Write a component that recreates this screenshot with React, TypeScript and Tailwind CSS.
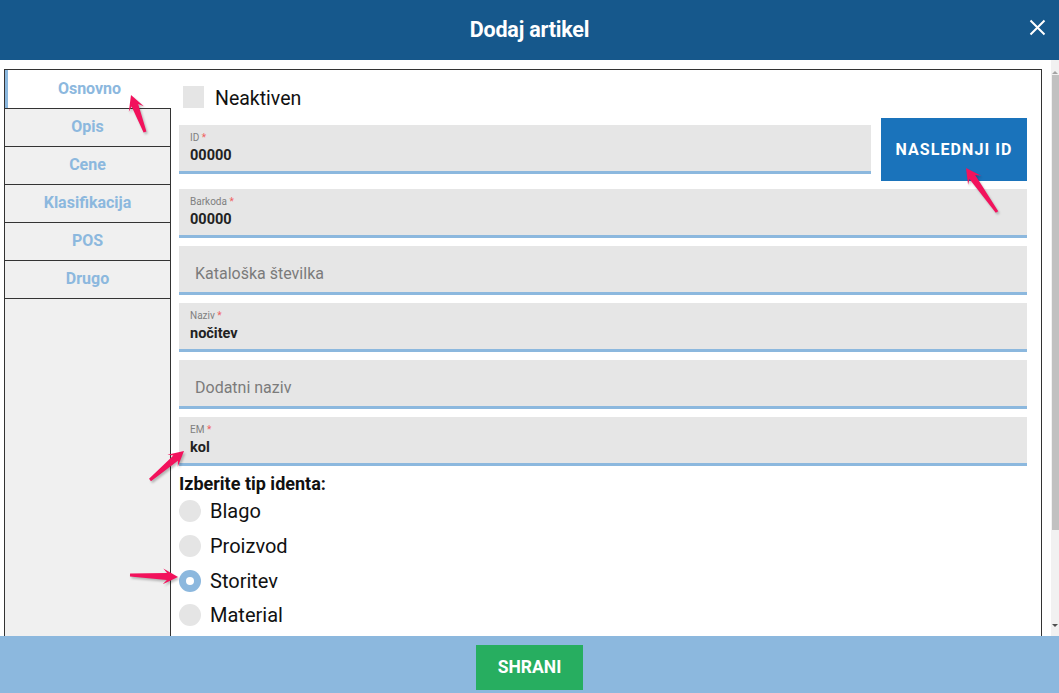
import React from "react";

const F = { fontFamily: "Roboto, 'Liberation Sans', sans-serif" };

function Arrow({ tip, tail }: { tip: [number, number]; tail: [number, number] }) {
  const [tx, ty] = tip;
  const [bx, by] = tail;
  const dx = tx - bx;
  const dy = ty - by;
  const len = Math.hypot(dx, dy);
  const ux = dx / len;
  const uy = dy / len;
  const px = -uy;
  const py = ux;
  const headLen = 15;
  const headW = 8;
  const neckW = 3.5;
  const tailW = 1.5;
  const hx = tx - ux * headLen;
  const hy = ty - uy * headLen;
  const nx = tx - ux * (headLen - 4);
  const ny = ty - uy * (headLen - 4);
  const pts = [
    [tx, ty],
    [hx + px * headW, hy + py * headW],
    [nx + px * neckW, ny + py * neckW],
    [bx + px * tailW, by + py * tailW],
    [bx - px * tailW, by - py * tailW],
    [nx - px * neckW, ny - py * neckW],
    [hx - px * headW, hy - py * headW],
  ]
    .map((p) => p.join(","))
    .join(" ");
  return (
    <g>
      <polygon points={pts} fill="rgba(0,0,0,0.25)" transform="translate(1.5,2)" filter="url(#blur)" />
      <polygon points={pts} fill="#f2125c" />
    </g>
  );
}

function Field({ label, value, placeholder }: { label?: string; value?: string; placeholder?: string }) {
  return (
    <div className="h-[49px] w-full bg-[#e6e6e6] border-b-[3px] border-[#8cb8de] pl-[11px] flex flex-col justify-center">
      {placeholder ? (
        <div className="text-[16px] text-[#7b7b7b] pl-[5px] pt-[10px]">{placeholder}</div>
      ) : (
        <>
          <div className="text-[10px] leading-[12px] text-[#808080]">
            {label} <span className="text-[#f06060]">*</span>
          </div>
          <div className="text-[14.5px] leading-[18px] font-bold text-[#222] mt-[3px]">{value}</div>
        </>
      )}
    </div>
  );
}

function Radio({ label, checked }: { label: string; checked?: boolean }) {
  return (
    <div className="h-[34.7px] flex items-center gap-[9px]">
      <div
        className={
          "w-[22px] h-[22px] rounded-full flex items-center justify-center " +
          (checked ? "bg-[#8cb8de]" : "bg-[#e5e5e5]")
        }
      >
        {checked && <div className="w-[8px] h-[8px] rounded-full bg-white" />}
      </div>
      <span className="text-[20px] leading-[24px] text-[#111]">{label}</span>
    </div>
  );
}

export default function App() {
  const tabs = ["Opis", "Cene", "Klasifikacija", "POS", "Drugo"];
  return (
    <div className="relative w-[1059px] h-[693px] overflow-hidden bg-white flex flex-col" style={F}>
      <div className="h-[60px] bg-[#16588c] flex items-center justify-center relative shrink-0">
        <span className="text-white text-[21.5px] font-bold tracking-[-0.2px]">Dodaj artikel</span>
        <svg className="absolute left-[1029px] top-[19px]" width="17" height="17" viewBox="0 0 17 17">
          <path d="M1.5 1.5 L15.5 15.5 M15.5 1.5 L1.5 15.5" stroke="white" strokeWidth="2" />
        </svg>
      </div>

      <div className="flex-1 flex overflow-hidden">
        <div className="flex-1 pl-[4px] pt-[9px] pr-[9px] overflow-hidden">
          <div className="border border-[#333] h-[620px] flex">
            <div className="w-[166px] flex flex-col shrink-0">
              <div className="h-[38px] bg-white border-l-[3px] border-[#8cb8de] flex items-center justify-center text-[16px] font-bold text-[#8cb8de] pb-[1px]">
                Osnovno
              </div>
              {tabs.map((t) => (
                <div
                  key={t}
                  className="h-[38px] bg-[#f0f0f0] border-t border-r border-[#333] flex items-center justify-center text-[16px] font-bold text-[#8cb8de] pb-[1px]"
                >
                  {t}
                </div>
              ))}
              <div className="flex-1 bg-[#f0f0f0] border-t border-r border-[#333]" />
            </div>

            <div className="flex-1 pl-[8px] pr-[14px] pt-[16px] flex flex-col">
              <div className="h-[22px] flex items-center gap-[11px] ml-[4px]">
                <div className="w-[21px] h-[22px] bg-[#e5e5e5]" />
                <span className="text-[19.5px] leading-[22px] text-[#111] pt-[3px]">Neaktiven</span>
              </div>

              <div className="flex items-center gap-[10px] mt-[10px]">
                <div className="flex-1">
                  <Field label="ID" value="00000" />
                </div>
                <div className="w-[146px] h-[63px] bg-[#1a73bb] flex items-center justify-center text-white text-[16px] font-bold tracking-[1.1px]">
                  NASLEDNJI ID
                </div>
              </div>

              <div className="flex flex-col gap-[8px] mt-[8px]">
                <Field label="Barkoda" value="00000" />
                <Field placeholder="Kataloška številka" />
                <Field label="Naziv" value="nočitev" />
                <Field placeholder="Dodatni naziv" />
                <Field label="EM" value="kol" />
              </div>

              <div className="text-[18px] font-bold text-[#111] mt-[7px] leading-[22px]">Izberite tip identa:</div>
              <div className="flex flex-col mt-[-1px]">
                <Radio label="Blago" />
                <Radio label="Proizvod" />
                <Radio label="Storitev" checked />
                <Radio label="Material" />
              </div>
            </div>
          </div>
        </div>
        <div className="w-[8px] bg-[#f1f1f1] flex flex-col items-center">
          <div className="h-[14px] w-full flex items-end justify-center">
            <div className="w-0 h-0 border-l-[3px] border-r-[3px] border-b-[3px] border-l-transparent border-r-transparent border-b-[#a3a3a3]" />
          </div>
          <div className="h-[455px] w-full bg-[#c1c1c1] mt-[1px] ml-[2px]" />
          <div className="flex-1" />
          <div className="h-[12px] w-full flex items-start justify-center">
            <div className="w-0 h-0 border-l-[3px] border-r-[3px] border-t-[3px] border-l-transparent border-r-transparent border-t-[#505050]" />
          </div>
        </div>
      </div>

      <div className="h-[57px] bg-[#8cb8de] flex justify-center pt-[9px] shrink-0">
        <div className="w-[107px] h-[45px] bg-[#27ae60] flex items-center justify-center text-white text-[17.5px] font-bold">
          SHRANI
        </div>
      </div>

      <svg className="absolute inset-0 pointer-events-none" width="1059" height="693">
        <defs>
          <filter id="blur">
            <feGaussianBlur stdDeviation="1.2" />
          </filter>
        </defs>
        <Arrow tip={[131, 95]} tail={[145, 132]} />
        <Arrow tip={[966, 168]} tail={[997, 212]} />
        <Arrow tip={[184, 451]} tail={[150, 480]} />
        <Arrow tip={[178, 577]} tail={[130, 575]} />
      </svg>
    </div>
  );
}
